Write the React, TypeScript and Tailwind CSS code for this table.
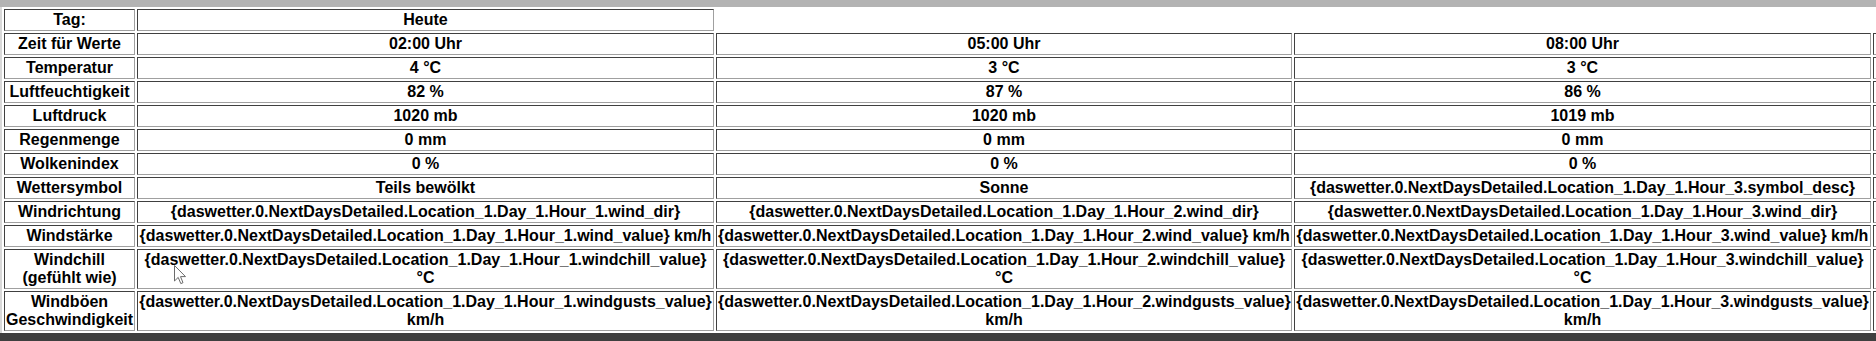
import React from "react";

const CELL =
  "border border-solid border-t-[#404040] border-l-[#404040] border-b-[#a0a0a0] border-r-[#a0a0a0] p-px text-center align-middle";

const P = "{daswetter.0.NextDaysDetailed.Location_1.Day_1.Hour_";

type Row = { label: React.ReactNode; values: React.ReactNode[]; nowrap?: boolean };

const hours = [1, 2, 3];

const rows: Row[] = [
  { label: "Zeit für Werte", values: ["02:00 Uhr", "05:00 Uhr", "08:00 Uhr"] },
  { label: "Temperatur", values: ["4 °C", "3 °C", "3 °C"] },
  { label: "Luftfeuchtigkeit", values: ["82 %", "87 %", "86 %"] },
  { label: "Luftdruck", values: ["1020 mb", "1020 mb", "1019 mb"] },
  { label: "Regenmenge", values: ["0 mm", "0 mm", "0 mm"] },
  { label: "Wolkenindex", values: ["0 %", "0 %", "0 %"] },
  {
    label: "Wettersymbol",
    values: ["Teils bewölkt", "Sonne", `${P}3.symbol_desc}`],
    nowrap: true,
  },
  { label: "Windrichtung", values: hours.map((h) => `${P}${h}.wind_dir}`), nowrap: true },
  { label: "Windstärke", values: hours.map((h) => `${P}${h}.wind_value} km/h`), nowrap: true },
  {
    label: (
      <>
        Windchill
        <br />
        (gefühlt wie)
      </>
    ),
    values: hours.map((h) => (
      <>
        {`${P}${h}.windchill_value}`}
        <br />
        °C
      </>
    )),
    nowrap: true,
  },
  {
    label: (
      <>
        Windböen
        <br />
        Geschwindigkeit
      </>
    ),
    values: hours.map((h) => (
      <>
        {`${P}${h}.windgusts_value}`}
        <br />
        km/h
      </>
    )),
    nowrap: true,
  },
];

export default function App() {
  return (
    <div className="relative w-[1876px] h-[341px] bg-white overflow-hidden flex flex-col">
      <div className="h-[7px] shrink-0 bg-[#b3b3b3]" />
      <div className="h-[326px] shrink-0 border-l-2 border-solid border-l-[#d9d9d9] overflow-hidden">
        <table className="table-fixed border-separate border-spacing-[2px] w-[2450px] font-['Liberation_Sans',Arial,sans-serif] font-bold text-[16px] leading-[18px] text-black">
          <colgroup>
            <col className="w-[131px]" />
            <col className="w-[577px]" />
            <col className="w-[576px]" />
            <col className="w-[577px]" />
            <col className="w-[577px]" />
          </colgroup>
          <tbody>
            <tr>
              <td className={CELL}>Tag:</td>
              <td className={CELL}>Heute</td>
            </tr>
            {rows.map((r, i) => (
              <tr key={i}>
                <td className={CELL}>{r.label}</td>
                {r.values.map((v, j) => (
                  <td key={j} className={`${CELL} ${r.nowrap ? "whitespace-nowrap" : ""}`}>
                    {v}
                  </td>
                ))}
                <td className={CELL}>{"\u00a0"}</td>
              </tr>
            ))}
          </tbody>
        </table>
      </div>
      <div className="flex-1 bg-[#3f3f3f]" />
      <svg
        className="absolute left-[174px] top-[265px]"
        width="13"
        height="20"
        viewBox="0 0 13 20"
      >
        <path
          d="M0.5 0.5 L0.5 16 L4.2 12.4 L6.8 18.6 L9 17.7 L6.5 11.6 L11.5 11.6 Z"
          fill="#ffffff"
          stroke="#6b6b6b"
          strokeWidth="1"
        />
      </svg>
    </div>
  );
}
